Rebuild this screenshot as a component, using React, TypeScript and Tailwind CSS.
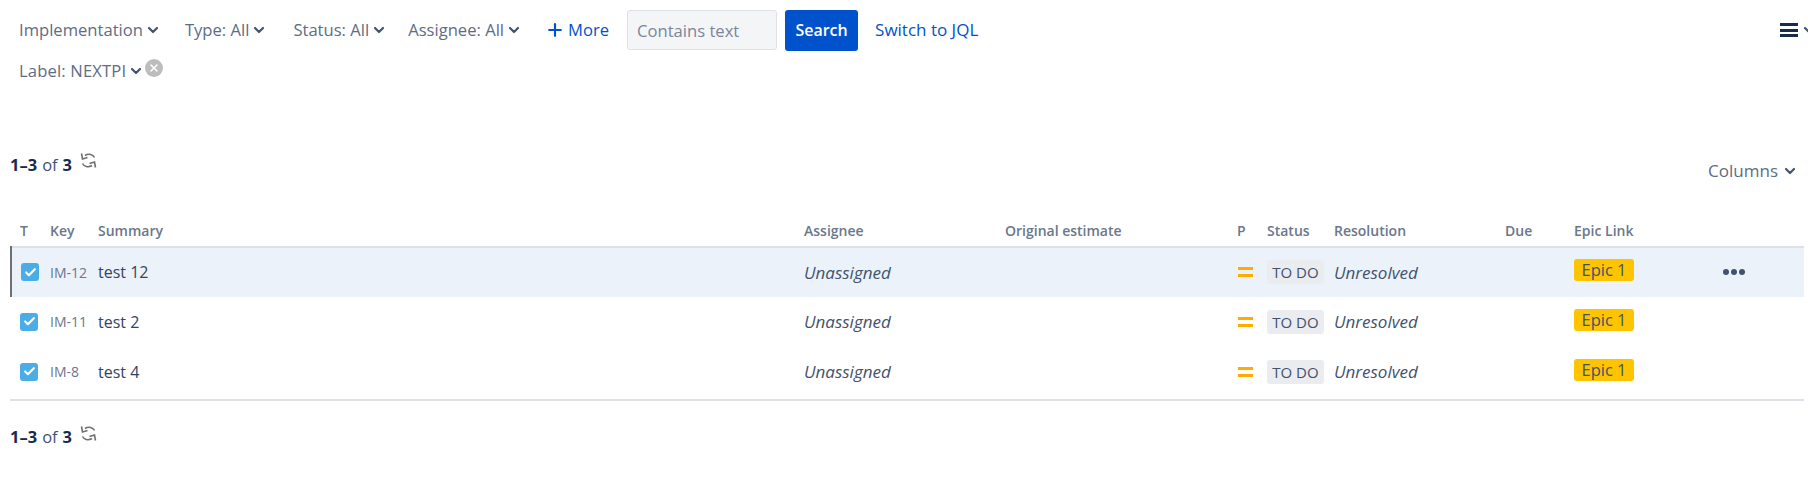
import React from 'react';
import { ChevronDown, Plus, X, Check } from 'lucide-react';

const rows = [
  { key: 'IM-12', summary: 'test 12', active: true },
  { key: 'IM-11', summary: 'test 2', active: false },
  { key: 'IM-8', summary: 'test 4', active: false },
];

const headers = ['T', 'Key', 'Summary', 'Assignee', 'Original estimate', 'P', 'Status', 'Resolution', 'Due', 'Epic Link', ''];

function Filter({ label, className }: { label: string; className: string }) {
  return (
    <button className={`flex items-center gap-[2px] text-[16.6px] text-[#5e6c84] ${className}`}>
      {label}
      <ChevronDown size={16} strokeWidth={3.2} className="text-[#42526e]" />
    </button>
  );
}

function RefreshIcon() {
  return (
    <svg width="17" height="19" viewBox="0 0 17 19" fill="none" className="ml-[8px] -mt-[9px] text-[#707070]">
      <path d="M14.5 6.5C13 3.5 9 2 5 4.5" stroke="currentColor" strokeWidth="1.6" />
      <path d="M1.5 2.5L2.5 8L7.5 6.5" stroke="currentColor" strokeWidth="1.6" />
      <path d="M2.5 12.5C4 15.5 8 17 12 14.5" stroke="currentColor" strokeWidth="1.6" />
      <path d="M15.5 16.5L14.5 11L9.5 12.5" stroke="currentColor" strokeWidth="1.6" />
    </svg>
  );
}

function Pager() {
  return (
    <div className="flex items-center text-[16.5px] text-[#42526e]">
      <span className="font-bold text-[#172b4d]">1–3</span>
      <span className="mx-[5px]">of</span>
      <span className="font-bold text-[#172b4d]">3</span>
      <RefreshIcon />
    </div>
  );
}

export default function App() {
  return (
    <div className="h-[503px] w-full overflow-hidden bg-white font-['Open_Sans','Noto_Sans',sans-serif]">
      <div className="flex h-[59px] items-center pl-[19px] pt-[1px]">
        <Filter label="Implementation" className="mr-[24px]" />
        <Filter label="Type: All" className="mr-[26px]" />
        <Filter label="Status: All" className="mr-[21px]" />
        <Filter label="Assignee: All" className="mr-[23px]" />
        <button className="flex items-center gap-[3px] text-[16.6px] text-[#0052cc]">
          <Plus size={20} strokeWidth={2.6} />
          More
        </button>
        <input
          placeholder="Contains text"
          className="ml-[18px] h-[40px] w-[150px] rounded-[3px] border border-[#dfe1e6] bg-[#f4f5f7] px-[9px] text-[16.6px] outline-none placeholder:text-[#7a869a]"
        />
        <button className="ml-[8px] h-[41px] w-[73px] rounded-[3px] bg-[#0052cc] text-[16px] font-semibold text-white">Search</button>
        <a className="ml-[17px] text-[17px] text-[#0052cc]">Switch to JQL</a>
        <div className="ml-auto flex w-[28px] shrink-0 items-center overflow-hidden">
          <span className="flex w-[18px] shrink-0 flex-col gap-[2.5px]">
            <span className="h-[3px] bg-[#172b4d]" />
            <span className="h-[3px] bg-[#172b4d]" />
            <span className="h-[3px] bg-[#172b4d]" />
          </span>
          <ChevronDown size={16} strokeWidth={3.2} className="ml-[3px] shrink-0 text-[#42526e]" />
        </div>
      </div>

      <div className="flex items-center pl-[19px]">
        <Filter label="Label: NEXTPI" className="tracking-[0.15px]" />
        <span className="ml-[1px] -mt-[6px] flex h-[18px] w-[18px] items-center justify-center rounded-full bg-[#bdbdbd]">
          <X size={12} strokeWidth={3} className="text-white" />
        </span>
      </div>

      <div className="flex items-start justify-between pl-[10px] pr-[10px] pt-[69px]">
        <Pager />
        <button className="mt-[5px] flex items-center gap-[4px] text-[17px] text-[#5e6c84]">
          Columns
          <ChevronDown size={16} strokeWidth={3.2} className="text-[#42526e]" />
        </button>
      </div>

      <table className="ml-[10px] mt-[28px] w-[1794px] table-fixed border-collapse [&_td]:pb-[1px]">
        <colgroup>
          <col className="w-[30px]" />
          <col className="w-[48px]" />
          <col className="w-[706px]" />
          <col className="w-[201px]" />
          <col className="w-[232px]" />
          <col className="w-[30px]" />
          <col className="w-[67px]" />
          <col className="w-[171px]" />
          <col className="w-[69px]" />
          <col className="w-[130px]" />
          <col />
        </colgroup>
        <thead>
          <tr className="h-[36px] border-b-2 border-[#dfe1e6]">
            {headers.map((h) => (
              <th key={h} className="pl-[9px] pt-[4px] text-left text-[14px] font-semibold text-[#6b778c]">{h}</th>
            ))}
          </tr>
        </thead>
        <tbody>
          {rows.map((r) => (
            <tr key={r.key} className={`h-[50px] ${r.active ? 'bg-[#ebf2f9]' : ''}`}>
              <td className={`pl-[9px] ${r.active ? 'border-l-2 border-[#707070]' : ''}`}>
                <span className="flex h-[18px] w-[18px] items-center justify-center rounded-[3px] bg-[#4bade8]">
                  <Check size={13} strokeWidth={4} className="text-white" />
                </span>
              </td>
              <td className="pl-[9px] text-[14px] text-[#6b778c]">{r.key}</td>
              <td className="pl-[9px] text-[16px] text-[#344563]">{r.summary}</td>
              <td className="pl-[9px] text-[17px] italic text-[#42526e]">Unassigned</td>
              <td />
              <td className="pl-[10px]">
                <div className="flex w-[15px] flex-col gap-[4px]">
                  <span className="h-[3px] bg-[#ffab00]" />
                  <span className="h-[3px] bg-[#ffab00]" />
                </div>
              </td>
              <td className="pl-[9px]">
                <span className="inline-block h-[24px] w-[57px] rounded-[3px] bg-[#ebecf0] text-center text-[15px] font-medium leading-[24px] text-[#42526e]">TO DO</span>
              </td>
              <td className="pl-[9px] text-[17px] italic text-[#42526e]">Unresolved</td>
              <td />
              <td className="pl-[9px]">
                <span className="-mt-[4px] block h-[22px] w-[60px] rounded-[3px] bg-[#ffc400] text-center text-[16.5px] leading-[22px] text-[#42526e]">Epic 1</span>
              </td>
              <td className="pl-[28px]">
                {r.active && (
                  <div className="flex gap-[2px]">
                    <span className="h-[6px] w-[6px] rounded-full bg-[#42526e]" />
                    <span className="h-[6px] w-[6px] rounded-full bg-[#42526e]" />
                    <span className="h-[6px] w-[6px] rounded-full bg-[#42526e]" />
                  </div>
                )}
              </td>
            </tr>
          ))}
        </tbody>
      </table>
      <div className="ml-[10px] mt-[2px] h-[2px] w-[1794px] bg-[#dfe1e6]" />

      <div className="pl-[10px] pt-[24px]">
        <Pager />
      </div>
    </div>
  );
}
